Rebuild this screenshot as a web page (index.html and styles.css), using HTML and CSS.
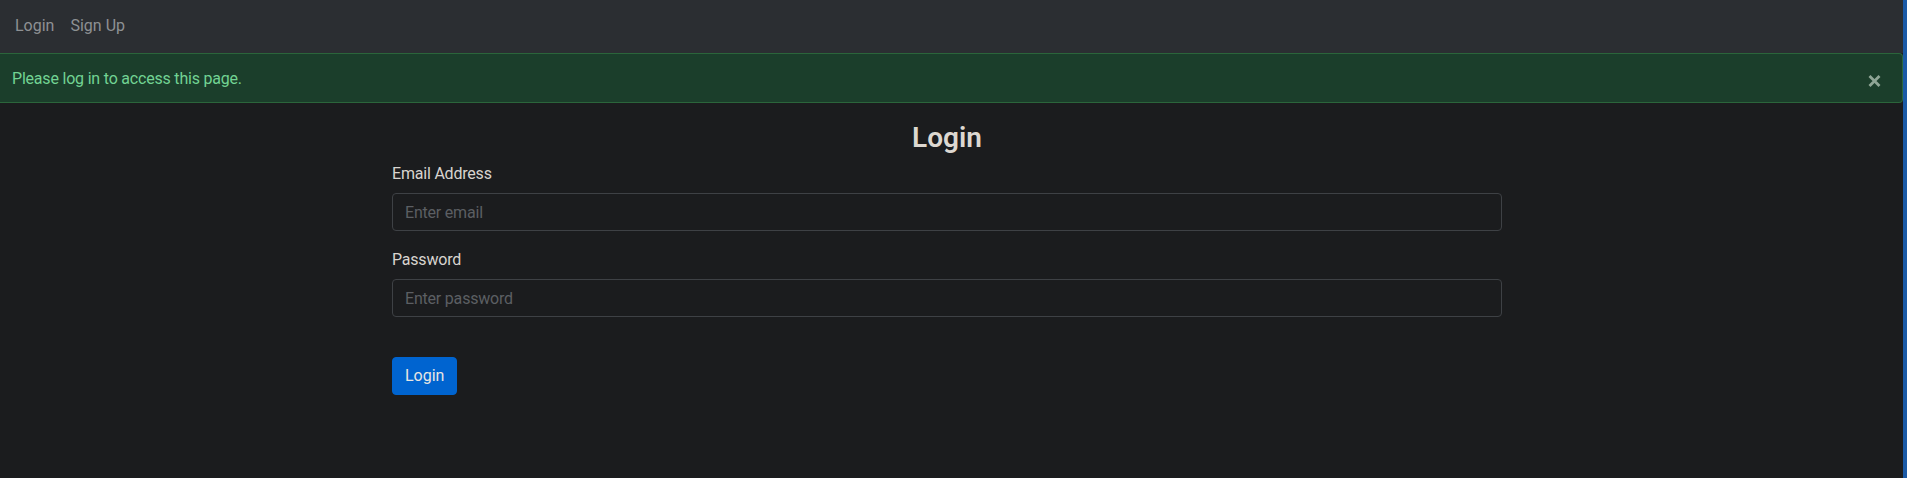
FILE: index.html
```html
<!DOCTYPE html>
<html lang="en">
<head>
<meta charset="utf-8">
<title>Login</title>
<link rel="stylesheet" href="styles.css">
</head>
<body>
<div class="page">
  <nav class="navbar">
    <a class="nav-link" href="#">Login</a>
    <a class="nav-link" href="#">Sign Up</a>
  </nav>
  <div class="alert">
    <span class="alert-text">Please log in to access this page.</span>
    <button class="close" type="button" aria-label="Close">
      <svg width="13" height="12" viewBox="0 0 13 12"><path d="M1.5 1 L11.5 11 M11.5 1 L1.5 11" stroke="#8fa596" stroke-width="2.8" stroke-linecap="butt" fill="none"/></svg>
    </button>
  </div>
  <main class="main">
    <div class="container">
      <h3 class="title">Login</h3>
      <form class="form">
        <div class="group">
          <label class="label" for="email">Email Address</label>
          <input class="input" id="email" type="email" placeholder="Enter email">
        </div>
        <div class="group">
          <label class="label" for="password">Password</label>
          <input class="input" id="password" type="password" placeholder="Enter password">
        </div>
        <button class="btn" type="submit">Login</button>
      </form>
    </div>
  </main>
</div>
<div class="edge"></div>
</body>
</html>
```

FILE: styles.css
```css
html, body {
  margin: 0;
  padding: 0;
  height: 100%;
}
body {
  display: flex;
  background: #1b1c1e;
  font-family: "Segoe UI", Roboto, "Noto Sans", sans-serif;
  font-size: 16px;
  line-height: 24px;
  letter-spacing: -0.2px;
  color: #d8d4cf;
  overflow: hidden;
}
.page {
  flex: 1;
  min-width: 0;
}
.edge {
  width: 4px;
  background: #1b5aa6;
  flex: none;
}
.navbar {
  display: flex;
  background: #2b2e32;
  padding: 14px 0 15px 7px;
}
.nav-link {
  color: #8e9194;
  text-decoration: none;
  padding: 0 8px;
  letter-spacing: 0;
}
.alert {
  display: flex;
  align-items: center;
  justify-content: space-between;
  background: #1b3e2b;
  border: 1px solid #2b653b;
  border-left: none;
  border-radius: 0 4px 4px 0;
  padding: 13px 0 11px 12px;
  color: #72d393;
}
.close {
  background: none;
  border: none;
  padding: 0;
  margin: 4px 21px 0 0;
  width: 13px;
  height: 12px;
  display: block;
  cursor: pointer;
}
.close svg {
  display: block;
}
.main {
  padding-right: 9px;
}
.container {
  max-width: 1110px;
  margin: 0 auto;
}
.title {
  margin: 18px 0 7px;
  font-size: 28px;
  line-height: 33.6px;
  font-weight: 600;
  letter-spacing: 0;
  text-align: center;
  color: #ddd8d1;
}
.group {
  margin-bottom: 17px;
}
.label {
  display: block;
  margin-bottom: 7px;
  color: #d8d4cf;
}
.input {
  display: block;
  box-sizing: border-box;
  width: 100%;
  height: 38px;
  padding: 7px 12px 5px;
  font: inherit;
  letter-spacing: inherit;
  line-height: 24px;
  color: #d8d4cf;
  background: #1b1c1e;
  border: 1px solid #3e4145;
  border-radius: 4px;
  outline: none;
}
.input::placeholder {
  color: #5c5f63;
}
.btn {
  display: block;
  margin-top: 40px;
  height: 38px;
  padding: 6px 12px;
  font: inherit;
  letter-spacing: 0;
  line-height: 24px;
  color: #e8e6e3;
  background: #0064d0;
  border: 1px solid #0064d0;
  border-radius: 4px;
  cursor: pointer;
}
```
